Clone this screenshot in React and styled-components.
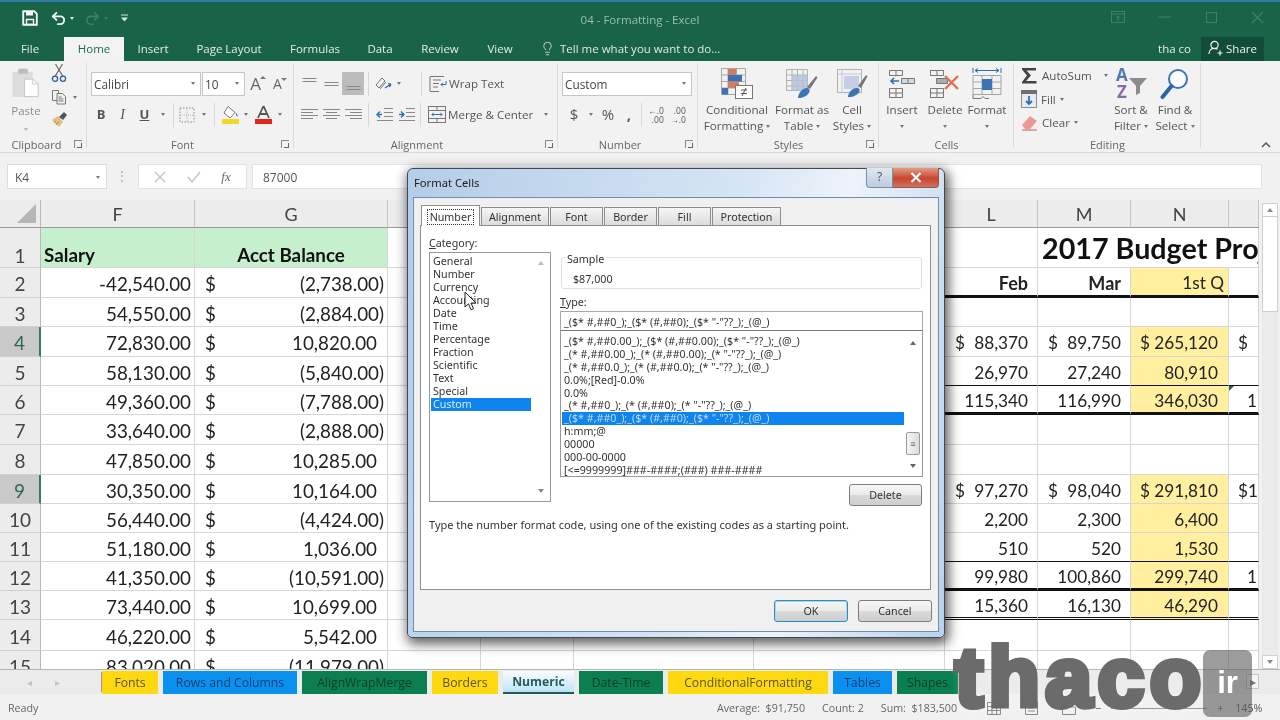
import React from "react";
import styled, { createGlobalStyle } from "styled-components";
import { Undo2, Redo2, Lightbulb } from "lucide-react";

const Global = createGlobalStyle`
  html, body { margin: 0; padding: 0; background: #f1f1f1; }
  * { box-sizing: border-box; }
`;
const UI = `"Open Sans", "Noto Sans", sans-serif`;
const CELL = `Lato, "Liberation Sans", sans-serif`;
const DLG = `"Noto Sans", "Open Sans", sans-serif`;

const Shell = styled.div`
  position: relative; width: 1280px; height: 720px; overflow: hidden; filter: blur(.35px);
  display: flex; flex-direction: column; font-family: ${UI}; color: #444; background: #f1f1f1;
`;
/* ---- title ---- */
const TitleBar = styled.header`
  height: 38px; flex: none; background: #196449; border-top: 2px solid #2e7aa0; padding-bottom: 4px;
  display: grid; grid-template-columns: 1fr auto 1fr; align-items: center;
`;
const Qat = styled.div`display: flex; align-items: center; padding-left: 21px; height: 100%;`;
const QatBtn = styled.span`
  display: inline-flex; align-items: center; justify-content: center;
  width: ${p => p.$w}px; margin-left: ${p => p.$ml || 0}px; color: ${p => p.$dim ? "#3f8068" : "#f2f6f4"};
`;
const QatCaret = styled.span`
  width: 0; height: 0; border: 2.5px solid transparent; border-top: 3px solid ${p => p.$dim ? "#3f8068" : "#dbe7e2"};
  margin: 3px 0 0 ${p => p.$ml || 3}px;
`;
const DocTitle = styled.div`font-size: 11.5px; color: #9ebdb0; margin-top: 2px;`;
const WinBtns = styled.div`display: flex; justify-content: flex-end; margin-right: -1px; height: 100%; align-items: center; margin-top: -2px;`;
const WinBtn = styled.span`width: 46.5px; display: flex; justify-content: center; color: #3f8068;`;

const TabsRow = styled.nav`
  height: 23px; flex: none; background: #196449; display: flex; align-items: stretch; padding-left: 12px;
  font-size: 11.5px; color: #e4ece8; & > * { padding-bottom: 2px; }
`;
const RibbonTab = styled.span`
  width: ${p => p.$w}px; margin-left: ${p => p.$ml || 0}px; display: flex; align-items: center; justify-content: center;
  ${p => p.$active ? "background:#f3f3f3;color:#1e6b4d;margin-top:-1px;" : ""}
`;
const TellMe = styled.span`display: flex; align-items: center; gap: 5px; margin-left: 14px; color: #dfe8e4;`;
const Spacer = styled.span`flex: 1;`;
const UserName = styled.span`display: flex; align-items: center; margin-right: 10px;`;
const ShareBtn = styled.span`
  width: 63px; margin-right: 16px; margin-top: -1px; background: #104c37; color: #f0f5f2;
  display: flex; align-items: center; justify-content: center; gap: 3px;
`;
/* ---- ribbon ---- */
const Ribbon = styled.section`
  height: 92px; flex: none; display: flex; background: #f2f2f3; border-bottom: 1px solid #d8d8d8; position: relative;
`;
const Group = styled.div`
  position: relative; width: ${p => p.$w}px; flex: none; display: flex; flex-direction: column;
  &::after { content: ""; position: absolute; right: 0; top: 2px; bottom: 4px; width: 1px; background: #dcdcdc; }
`;
const GroupBody = styled.div`flex: 1; display: flex; padding-left: ${p => p.$pl || 0}px; min-height: 0;`;
const GroupLabel = styled.div`height: 16px; flex: none; text-align: center; font-size: 11px; line-height: 17px; color: #666; padding-right: ${p => p.$pr || 0}px;`;
const Launcher = styled.span`
  position: absolute; right: 5px; bottom: 4px; width: 8px; height: 8px; border-left: 1px solid #888; border-top: 1px solid #888;
  &::after { content: ""; position: absolute; right: 0; bottom: 0; width: 4px; height: 4px; border-right: 1px solid #666; border-bottom: 1px solid #666; }
`;
const Collapse = styled.span`position: absolute; right: 9px; bottom: 4px; color: #555; display: flex;`;
const Caret = styled.span`
  display: inline-block; width: 0; height: 0; flex: none; vertical-align: middle;
  border-left: 2.5px solid transparent; border-right: 2.5px solid transparent; border-top: 3px solid #777;
  margin-left: ${p => p.$ml ?? 3}px;
`;
const PasteCol = styled.div`
  width: 36px; margin-left: 8px; padding-top: 6px; display: flex; flex-direction: column; align-items: center; color: #8d8d8d; font-size: 11.5px;
`;
const PasteLabel = styled.span`line-height: 15px; margin-top: 3px;`;
const PasteCaret = styled.span`margin-top: 3px; opacity: .5;`;
const ClipCol = styled.div`display: flex; flex-direction: column; padding-top: 1px; margin-left: 3px;`;
const ClipItem = styled.div`height: 22px; margin-bottom: ${p => p.$mb || 0}px; display: flex; align-items: center; width: 36px; padding-left: 4px;`;
const Stack = styled.div`display: flex; flex-direction: column; padding-top: 11px; gap: 8px;`;
const ToolRow = styled.div`display: flex; align-items: center; height: 23px;`;
const TextBox = styled.div`
  width: ${p => p.$w}px; height: 24px; background: #fff; border: 1px solid #c6c6c6; margin-right: ${p => p.$mr ?? 1}px;
  display: flex; align-items: center; justify-content: space-between; font-size: 11.8px; color: #444; padding: 0 5px 0 2px;
`;
const Tool = styled.span`
  width: ${p => p.$w || 22}px; height: 23px; flex: none; display: flex; align-items: center; justify-content: center;
  ${p => p.$on ? "background:#bcbcbc;" : ""}
`;
const Glyph = styled.span`
  font-family: ${p => p.$serif ? `"Liberation Serif", serif` : UI}; font-size: ${p => p.$s || 14}px; color: ${p => p.$c || "#555"};
  font-weight: ${p => p.$b ? 700 : 400}; font-style: ${p => p.$i ? "italic" : "normal"};
  text-decoration: ${p => p.$u ? "underline" : "none"}; line-height: 1;
`;
const DecGlyph = styled.span`display: inline-block; text-align: right; font-size: 8.5px; line-height: 9px; white-space: pre; color: #555;`;
const GrowA = styled.span`position: relative; font-size: ${p => p.$s}px; color: #666; line-height: 1; padding-right: 5px;
  &::after { content: ""; position: absolute; right: 0; top: 1px; border: 3px solid transparent; border-top: 0; border-bottom: 3px solid #777; ${p => p.$down ? "transform:rotate(180deg);" : ""} }
`;
const VSep = styled.span`width: 1px; height: 24px; background: #d8d8d8; flex: none; margin: 0 ${p => p.$mr ?? 3}px 0 ${p => p.$ml ?? 3}px;`;
const WideTool = styled.span`display: flex; align-items: center; gap: 2px; font-size: 11.6px; color: #555; width: ${p => p.$w}px; white-space: nowrap; flex: none;`;
const BigBtn = styled.div`
  width: ${p => p.$w}px; flex: none; display: flex; flex-direction: column; align-items: center; font-size: 11.6px; color: #555; line-height: 16px; text-align: center; white-space: nowrap;
`;
const BigIcon = styled.div`height: 41px; display: flex; align-items: center; justify-content: center; padding-top: 4px;`;
const EditCol = styled.div`width: 95px; padding-top: 3px; padding-left: 7px; display: flex; flex-direction: column;`;
const EditRow = styled.div`height: 23.5px; display: flex; align-items: center; gap: 4px; font-size: 11.6px; color: #555; white-space: nowrap;`;
/* ---- formula ---- */
const FormulaBar = styled.div`height: 47px; flex: none; display: flex; padding: 11px 18px 0 7px; background: #f1f1f1;`;
const NameBox = styled.div`
  width: 100px; height: 25px; background: #fff; border: 1px solid #dcdcdc; padding: 1px 6px 0 7px; font-size: 12px; color: #555;
  display: flex; align-items: center; justify-content: space-between;
`;
const Dots = styled.span`width: 31px; text-align: center; color: #aaa; font-size: 12px; line-height: 24px; letter-spacing: 1px;`;
const FxBox = styled.div`
  width: 109px; height: 25px; background: #fff; border: 1px solid #e2e2e2; display: flex; align-items: center; justify-content: space-around; padding: 0 5px; color: #c0c0c0;
`;
const FormulaInput = styled.div`
  flex: 1; margin-left: 5px; height: 25px; background: #fff; border: 1px solid #e2e2e2; padding: 1px 0 0 10px; font-size: 12px; color: #555; display: flex; align-items: center;
`;
/* ---- sheet ---- */
const SheetArea = styled.div`flex: none; height: 469px; display: flex; background: #f1f1f1;`;
const SheetGrid = styled.div`
  width: 1259px; flex: none; height: 469px; overflow: hidden; display: grid; background: #fff;
  grid-template-columns: 41px 154px 193px 93px 93px 180px 191px 93px 93px 98px 30px;
  grid-template-rows: 28px 40px 30px 29px 30px 29px 29px 30px 30px 29px 29px 29px 29px 29px 31px 30px;
  font-family: ${CELL}; color: #222;
`;
const CornerCell = styled.div`
  background: #ececec; border-right: 1px solid #b9b9b9; border-bottom: 1px solid #9a9a9a; position: relative;
  &::after { content: ""; position: absolute; right: 4px; bottom: 4px; border-style: solid; border-width: 0 0 19px 19px; border-color: transparent transparent #b6b6b6 transparent; }
`;
const ColHead = styled.div`
  background: #ececec; border-right: 1px solid #c4c4c4; border-bottom: 1px solid #9a9a9a; font-size: 18px; color: #444;
  display: flex; align-items: center; justify-content: center;
`;
const RowHead = styled.div`
  background: ${p => p.$sel ? "#c9c9c9" : "#ececec"}; color: ${p => p.$sel ? "#2c6a52" : "#444"};
  border-right: ${p => p.$sel ? "2px solid #3a7a5f" : "1px solid #b9b9b9"}; border-bottom: 1px solid #d0d0d0; font-size: 19px;
  display: flex; align-items: ${p => p.$end ? "flex-end" : "center"}; justify-content: center; padding-top: ${p => p.$end ? 0 : 2}px;
`;
const lineOf = v => v === "thick" ? "3px solid #111" : v === "thin" ? "1px solid #111" : v === "double" ? "3px double #111" : "1px solid #d6d6d6";
const Cell = styled.div`
  position: relative; min-width: 0; white-space: nowrap; overflow: hidden;
  grid-column: ${p => p.$span ? `span ${p.$span}` : "auto"};
  background: ${p => p.$fill || "#fff"}; border-right: 1px solid #d6d6d6; border-bottom: ${p => lineOf(p.$line)};
  display: flex; align-items: center; justify-content: flex-end;
  padding: ${p => p.$pad || "2px 4px 0"};
  font-size: ${p => p.$s || 18.8}px; font-weight: ${p => p.$b ? 700 : 400}; color: #222;
`;
const AccCell = styled(Cell)`justify-content: space-between; padding: ${p => p.$pad || "2px 3px 0 10px"};`;
const TitleCell = styled(Cell)`justify-content: flex-start; padding: 0 0 0 4px; font-size: 28.7px; font-weight: 700; color: #111; overflow: hidden;`;
const HeadCell = styled(Cell)`justify-content: ${p => p.$center ? "center" : "flex-start"}; align-items: flex-end; padding: 0 3px 1px; background: #c6efce; font-weight: 700; font-size: 18.8px; color: #111;`;
const Amount = styled.span`padding-right: ${p => p.$pos ? 7 : 0}px;`;
const CornerTick = styled.span`position: absolute; left: 0; top: 0; border-style: solid; border-width: 5px 5px 0 0; border-color: #1f6b44 transparent transparent transparent;`;
const VScroll = styled.aside`
  width: 21px; flex: none; display: flex; flex-direction: column; padding: 3px 2px 0 3px; background: #f1f1f1;
`;
const ScrollArrow = styled.span`height: 14px; background: #fff; border: 1px solid #cfcfcf; flex: none; display: flex; align-items: center; justify-content: center;`;
const ScrollThumb = styled.span`height: 95px; background: #fff; border: 1px solid #cfcfcf; border-top: 0; flex: none;`;
const ScrollTrack = styled.span`flex: 1; background: #ebebeb;`;
const Tri = styled.span`width: 0; height: 0; border-left: 3.5px solid transparent; border-right: 3.5px solid transparent;
  ${p => p.$down ? `border-top: 4px solid ${p.$c || "#8a8a8a"};` : `border-bottom: 4px solid ${p.$c || "#8a8a8a"};`}
`;
/* ---- sheet tabs ---- */
const TabBar = styled.div`height: 25px; flex: none; display: flex; background: #ebebeb; border-top: 1px solid #b5b5b5; position: relative;`;
const TabNav = styled.div`width: 102px; flex: none; display: flex; align-items: center; color: #c4c4c4; font-size: 10px; padding-left: 27px; gap: 23px; border-right: 1px solid #999; margin: 2px 0 2px;`;
const SheetTabs = styled.div`display: flex; gap: 5px; padding-top: 1px;`;
const SheetTab = styled.div`
  width: ${p => p.$w}px; height: 23px; background: ${p => p.$bg}; color: ${p => p.$fg}; font-size: 12.2px;
  display: flex; align-items: center; justify-content: center; white-space: nowrap;
  ${p => p.$active ? "background:linear-gradient(#fafdff,#bfe3f7);font-weight:700;color:#245f5c;border-bottom:2px solid #1f5d58;" : ""}
`;
const TabScrollRight = styled.span`position: absolute; right: 21px; top: 4px; width: 13px; height: 15px; border: 1px solid #c4c4c4; background: #f4f4f4; display: flex; align-items: center; justify-content: center; color: #777; font-size: 8px;`;
const StatusBar = styled.footer`
  flex: 1; display: grid; grid-template-columns: 709px 1fr; align-items: center; background: #f1f1f1; font-size: 10.7px; color: #666; padding: 2px 0 0 8px;
`;
const StatusRight = styled.div`display: flex; align-items: center; gap: 17px; white-space: nowrap;`;
const ViewIcons = styled.div`display: flex; align-items: center; gap: 24px; margin-left: 13px; color: #777;`;
const Zoomer = styled.div`display: flex; align-items: center; margin-left: -5px; gap: 6px; color: #555;`;
const ZoomLine = styled.span`width: 96px; height: 1px; background: #999; margin: 0 4px;`;
const ZoomValue = styled.span`margin-left: 6px;`;
/* ---- dialog ---- */
const Dialog = styled.div`
  position: absolute; left: 407px; top: 168px; width: 538px; height: 470px; border: 1px solid #3e4a55; border-radius: 6px 6px 5px 5px;
  background: linear-gradient(100deg, #b4cde8 0%, #d6e5f4 55%, #eef3f9 72%, #b9d1ea 100%); box-shadow: 2px 4px 12px 2px rgba(0,0,0,.62);
  display: flex; flex-direction: column; font-family: ${DLG}; color: #333; font-size: 10.7px;
`;
const DlgTitle = styled.div`height: 28px; flex: none; display: flex; align-items: center; padding: 0 0 2px 6px; font-size: 11.2px; color: #222; position: relative;`;
const DlgBtns = styled.div`position: absolute; top: -1px; right: 5px; display: flex; height: 20px;`;
const HelpBtn = styled.span`width: 27px; border: 1px solid #7d8fa3; border-top: 0; border-radius: 0 0 0 4px; background: linear-gradient(#dde7f1,#bccddd); text-align: center; color: #556; font-size: 12px; line-height: 18px;`;
const CloseBtn = styled.span`width: 46px; border: 1px solid #8a5a50; border-top: 0; border-left: 0; border-radius: 0 0 4px 0; background: linear-gradient(#e49a82,#c8452f 55%,#d27460); color: #fff; display: flex; align-items: center; justify-content: center;`;
const DlgPanel = styled.div`
  flex: 1; margin: 0 5px 5px 5px; background: #f0f0f0; border: 1px solid #6f8daf; padding: 8px 7px 0 6px; display: flex; flex-direction: column; position: relative;
`;
const DlgTabs = styled.div`display: flex; align-items: flex-end; gap: 1px; height: 20px; padding-left: 1px; margin-bottom: -1px; position: relative; z-index: 1;`;
const DlgTab = styled.div`
  width: ${p => p.$w}px; height: ${p => p.$active ? 21 : 19}px; border: 1px solid #8e8e8e; border-bottom: ${p => p.$active ? 0 : "1px solid #8e8e8e"}; padding-top: 1px;
  background: ${p => p.$active ? "#fff" : "linear-gradient(#f6f6f6,#dcdcdc)"}; display: flex; align-items: center; justify-content: center;
`;
const FocusText = styled.span`outline: 1px dotted #333; padding: 0 2px;`;
const Page = styled.div`
  height: 365px; flex: none; background: #fff; border: 1px solid #8e8e8e; padding: 9px 7px 0 8px; display: flex; flex-direction: column;
`;
const PageGrid = styled.div`display: grid; grid-template-columns: 122px 363px; column-gap: 9px; height: 270px;`;
const ColumnL = styled.div`display: flex; flex-direction: column;`;
const ColumnR = styled.div`display: flex; flex-direction: column; padding-top: 22px;`;
const FieldLabel = styled.div`height: ${p => p.$h || 17}px; line-height: 16px; margin-top: ${p => p.$mt || 0}px;`;
const Uline = styled.span`text-decoration: underline;`;
const CatList = styled.div`
  height: 250px; border: 1px solid #8f9aa5; display: flex; background: #fff; padding: 2px 0 0 1px;
`;
const Items = styled.div`flex: 1; min-width: 0;`;
const CatItem = styled.div`
  height: 13px; line-height: 13px; padding-left: 2px; white-space: nowrap;
  ${p => p.$sel ? "background:#0f83ee;color:#d8ecff;" : ""}
`;
const ListScroll = styled.div`width: ${p => p.$w}px; flex: none; display: flex; flex-direction: column; align-items: center; justify-content: space-between; padding: 6px 0 8px; position: relative;`;
const SampleBox = styled.div`
  height: 32px; margin: 0 1px; border: 1px solid #dfdfdf; border-radius: 3px; position: relative; padding: 14px 0 0 11px; line-height: 14px;
`;
const Legend = styled.span`position: absolute; left: 3px; top: -6px; background: #fff; padding: 0 2px;`;
const TypeInput = styled.div`height: 20px; border: 1px solid #a9a9a9; border-bottom: 1px solid #777; padding-left: 3px; line-height: 20px; white-space: nowrap; font-size: 10.7px;`;
const TypeList = styled.div`height: 146px; border: 1px solid #8f9aa5; border-top: 0; display: flex; padding: 4px 0 0 1px; font-size: 10.7px;`;
const TypeItem = styled.div`
  height: 12.9px; line-height: 13px; padding-left: 2px; white-space: nowrap;
  ${p => p.$sel ? "background:#0f83ee;color:#bcdcfb;" : ""}
`;
const ScrollGrip = styled.span`
  position: absolute; left: 2px; top: 97px; width: 14px; height: 23px; border: 1px solid #9a9a9a; border-radius: 2px; background: linear-gradient(90deg,#f5f5f5,#dcdcdc);
  display: flex; align-items: center; justify-content: center; color: #666; font-size: 9px; line-height: 3px;
`;
const DlgButton = styled.div`
  width: ${p => p.$w || 74}px; height: 22px; border: 1px solid ${p => p.$def ? "#3e87b4" : "#7d7d7d"}; border-radius: 3px; ${p => p.$def ? "box-shadow: inset 0 0 0 1px #a8d6ef;" : ""}
  background: linear-gradient(#f6f6f6 0%,#ebebeb 48%,#d9d9d9 52%,#cfcfcf 100%); display: flex; align-items: center; justify-content: center; color: #333;
`;
const DeleteRow = styled.div`display: flex; justify-content: flex-end; margin: 7px 1px 0 0;`;
const Desc = styled.div`margin-top: 13px; line-height: 14px; white-space: nowrap; font-size: 11px;`;
const DlgFoot = styled.div`display: flex; justify-content: flex-end; gap: 10px; padding-top: 10px; margin-right: -1px;`;
const MouseCursor = styled.svg`position: absolute; left: 50px; top: 93px; z-index: 3;`;
/* ---- watermark ---- */
const Watermark = styled.div`
  position: absolute; left: 955px; top: 631px; z-index: 5; font-family: "Liberation Sans", sans-serif; font-weight: 700; font-size: 84px; line-height: 92px;
  letter-spacing: 5.5px; color: #666; -webkit-text-stroke: 6px #666; opacity: .96; text-shadow: 0 0 8px rgba(255,255,255,.55);
`;
const WatermarkBadge = styled.div`
  position: absolute; left: 1203px; top: 650px; width: 49px; height: 67px; z-index: 6; border-radius: 7px; background: rgba(95,95,95,.62);
  color: #fff; font-family: "Liberation Sans", sans-serif; font-weight: 700; font-size: 31px; text-align: center; line-height: 66px;
`;

/* ---- icons ---- */
const S = ({ w, h, vb, children }) => <svg width={w} height={h} viewBox={vb || `0 0 ${w} ${h}`} fill="none">{children}</svg>;
const SaveIcon = () => <S w={16} h={16}><path d="M1.2 1.2h11l2.6 2.6v11H1.2z" stroke="#f4f7f5" strokeWidth="1.9"/><path d="M4 1.5h7v4H4z" fill="#f4f7f5"/><path d="M4.5 9.5h7v5h-7z" stroke="#f4f7f5" strokeWidth="1.4"/></S>;
const RestoreIcon = () => <S w={14} h={12}><rect x=".5" y=".5" width="13" height="11" stroke="#3f8068"/><path d="M1 3h12M7 10V5M5 7l2-2 2 2" stroke="#3f8068"/></S>;
const ShareIcon = () => <S w={15} h={16}><circle cx="6.5" cy="5" r="3.6" stroke="#f0f5f2" strokeWidth="1.2"/><path d="M1 14c0-4 2.5-5.6 5.5-5.6 1.2 0 2.4.3 3.3 1M9.5 13h5M12 10.5v5" stroke="#f0f5f2" strokeWidth="1.2"/></S>;
const PasteIcon = () => <S w={30} h={34}><path d="M1 5h8V1h6v4h7v26H1z" fill="#dcdcdc"/><rect x="7" y="2" width="10" height="5" fill="#bdbdbd"/><path d="M13.5 12.5h9l5 5v13h-14z" fill="#fff" stroke="#c4c4c4"/><path d="M22 12.5v5h5" stroke="#c4c4c4"/></S>;
const CutIcon = () => <S w={16} h={20}><path d="M4.5 1l7.5 12.5M11.5 1L4 13.5" stroke="#666" strokeWidth="1.2"/><circle cx="4" cy="15.8" r="2.6" stroke="#2f5f97" strokeWidth="1.3"/><circle cx="12" cy="15.8" r="2.6" stroke="#2f5f97" strokeWidth="1.3"/></S>;
const CopyIcon = () => <S w={16} h={16}><path d="M1.5 1.5h6v10h-6z" stroke="#777"/><path d="M6 4.5h5.5l3 3v7.5H6z" fill="#f2f2f3" stroke="#777"/><path d="M7.5 8h3M7.5 10h5M7.5 12h5" stroke="#777"/></S>;
const PainterIcon = () => <S w={18} h={18}><path d="M1 10l6-4 5 6-4 5z" fill="#e0c07f"/><path d="M3 13l2-2M5 15l2-3" stroke="#a88a4f"/><path d="M8 7l5-5 3 3-4 5z" fill="#555"/></S>;
const BordersIcon = () => <S w={16} h={16}><path d="M1 1h14v14H1z" stroke="#8a8a8a" strokeDasharray="1.5 1.5"/><path d="M8 1v14M1 8h14" stroke="#b5b5b5" strokeDasharray="1 1"/></S>;
const FillIcon = () => <S w={19} h={19}><path d="M7 1.5l7 6-5 5.5-6-5z" stroke="#777" fill="#fff"/><path d="M14.5 7.5c1.5 1.5 2.5 3 2 4-.7 0-1.5-1.5-2-4z" fill="#2f5f97"/><rect x="1" y="14" width="17" height="5" fill="#f3d727"/></S>;
const FontColorIcon = () => <S w={17} h={19}><path d="M8.5 1L3 13M8.5 1l5.5 12M5 9h7" stroke="#555" strokeWidth="1.8"/><rect y="14" width="17" height="5" fill="#e0261a"/></S>;
const Lines = ({ y, align }) => <S w={17} h={16}>{y.map((v, i) => { const wid = align === "r" ? (i % 2 ? 12 : 17) : align === "c" ? (i % 2 ? 11 : 17) : align === "l" ? (i % 2 ? 12 : 17) : 14; const x = align === "r" ? 17 - wid : align === "c" ? (17 - wid) / 2 : align === "l" ? 0 : 1.5; return <path key={i} d={`M${x} ${v}.5h${wid}`} stroke="#888"/>; })}</S>;
const Orient = () => <S w={18} h={16}><path d="M1 9l6-7 3 3-6 7zM5 13l6-7" stroke="#777"/><path d="M10 12l6-4M16 8l-3-.5M16 8l-1.5 3" stroke="#2f5f97" strokeWidth="1.2"/></S>;
const IndentIcon = ({ flip }) => <S w={17} h={15}><path d="M8 1.5h9M8 5.5h9M8 9.5h9M1 13.5h16" stroke="#888"/><path d={flip ? "M1 7.5h5M3 4.5L6 7.5 3 10.5" : "M6 7.5H1M4 4.5L1 7.5l3 3"} stroke="#2f6fb0" strokeWidth="1.4"/></S>;
const WrapIcon = () => <S w={18} h={18}><path d="M1 1.5h14M1 1.5v15h9M4 5h8M4 8.5h6M4 12h5" stroke="#777"/><path d="M17 6v3.5h-5M14 7.5l-2 2 2 2" stroke="#2f6fb0"/></S>;
const MergeIcon = () => <S w={18} h={17}><rect x=".5" y=".5" width="17" height="16" stroke="#777"/><path d="M1 4.5h16M1 12.5h16M9 1v3M9 13v3" stroke="#777"/><path d="M4 8.5h10M5.5 6.8L4 8.5l1.5 1.7M12.5 6.8L14 8.5l-1.5 1.7" stroke="#2f6fb0"/></S>;
const CondIcon = () => <S w={32} h={31}><g stroke="#a8a8a8"><path d="M.5.5h24v26H.5zM.5 7h24M.5 13.5h24M.5 20h24M7 .5v26M15.5.5v26"/></g><rect x="7" y="1" width="8" height="6" fill="#d47c5c"/><rect x="7" y="7" width="14" height="6.5" fill="#3b72b5"/><rect x="7" y="13.5" width="11" height="6.5" fill="#d47c5c"/><rect x="1" y="20" width="6" height="6.5" fill="#3b72b5"/><rect x="14.5" y="17.5" width="17" height="13" fill="#fff" stroke="#777"/><path d="M20 22h6M20 25.5h6M25 20l-4 8" stroke="#555"/></S>;
const TableIcon = () => <S w={32} h={30}><g stroke="#b0b0b0"><path d="M.5.5h21v21H.5zM.5 6h21M.5 11.5h21M.5 17h21M6 .5v21M11.5.5v21M17 .5v21"/></g><rect x="6" y="6" width="15.5" height="15.5" fill="#b8c2dd" opacity=".85"/><path d="M21 18L30 7l1.5 1.5L24 20z" fill="#777"/><path d="M12 29c0-4 4-10 9-10 2 0 3 1.5 2.5 3.5C22 27 16 29.5 12 29z" fill="#3b74b5"/></S>;
const CellStyleIcon = () => <S w={31} h={29}><path d="M.5.5h24v23H.5z" stroke="#b0b0b0"/><path d="M.5 5h24M5 .5v23" stroke="#c8c8c8"/><rect x="7" y="7" width="15" height="13" fill="#c4cee7"/><path d="M21 17L29 6l1.5 1.5L24 19z" fill="#777"/><path d="M11 28c0-4 4-9 9-9 2 0 3 1.5 2.5 3.5C21 26 15 28.5 11 28z" fill="#3b74b5"/></S>;
const InsertIcon = () => <S w={27} h={28}><g stroke="#777"><path d="M.5.5h13v5H.5zM7 .5v5"/><path d="M.5 18.5h13v9H.5zM7 18.5v9M.5 23h13"/><path d="M12.5 8.5h13v5h-13zM19 8.5v5" fill="#d4d8df"/></g><path d="M10 11H2M5 8l-3 3 3 3" stroke="#2f6fb0" strokeWidth="1.5"/></S>;
const DeleteIcon = () => <S w={31} h={28}><g stroke="#777"><path d="M.5.5h13v5H.5zM7 .5v5"/><path d="M.5 18.5h13v9H.5zM7 18.5v9M.5 23h13"/><path d="M6.5 8.5h11v5h-11z" fill="#a9afb9"/></g><path d="M15 6l13 13M28 6L15 19" stroke="#e2704d" strokeWidth="2.4"/></S>;
const FormatIcon = () => <S w={30} h={33}><path d="M1 1v5M29 1v5M3 3.5h24M3 3.5l3-2M3 3.5l3 2M27 3.5l-3-2M27 3.5l-3 2" stroke="#2f6fb0"/><g stroke="#a5a5a5"><path d="M1 8.5h28v19H1zM10 8.5v19M20 8.5v19M1 15h28M1 21.5h28"/></g><rect x="10" y="12" width="10" height="11" fill="#3b74b5"/><path d="M1 27.5v4h8l2-2 2 2h4" stroke="#777"/></S>;
const SigmaIcon = () => <S w={17} h={17}><path d="M1 1h14v2.5H5.5L10 8.5 5 14h10.5v2.5H1V15l5-6.5-5-6z" fill="#444"/></S>;
const FillDownIcon = () => <S w={16} h={18}><rect x=".5" y=".5" width="15" height="17" fill="#e3ebf5" stroke="#8d8d8d"/><rect width="16" height="4" fill="#6f6f6f"/><path d="M8 6v8M5 11l3 3 3-3" stroke="#2f6fb0" strokeWidth="1.8"/></S>;
const EraserIcon = () => <S w={17} h={17}><path d="M1 11l8-9 7 5-7 8H4z" fill="#e89a97"/><path d="M1 16h15" stroke="#d98a7f" strokeWidth="1.5"/></S>;
const SortIcon = () => <svg width="33" height="42" viewBox="0 -4 33 42"><text x="1" y="14" fontFamily="Open Sans, sans-serif" fontSize="17" fontWeight="700" fill="#5677b3">A</text><text x="2" y="31" fontFamily="Open Sans, sans-serif" fontSize="17" fontWeight="700" fill="#8a6aa8">Z</text><path d="M14 11h18l-7 8v7l-4 2v-9z" fill="#8c8c8c"/></svg>;
const FindIcon = () => <S w={30} h={32}><circle cx="18" cy="11" r="9" stroke="#3b74b5" strokeWidth="2" fill="#fdfdfd"/><path d="M11.5 18L2.5 29" stroke="#2b64a8" strokeWidth="4" strokeLinecap="round"/></S>;
const GridViewIcon = () => <S w={14} h={13}><path d="M.5.5h13v12H.5zM.5 4.5h13M.5 8.5h13M5 .5v12M9.5.5v12" stroke="#888"/></S>;
const PageIcon = () => <S w={13} h={14}><path d="M.5.5h12v13H.5zM3 4h7M3 7h7M3 10h7" stroke="#888"/></S>;
const BreakIcon = () => <S w={14} h={13}><path d="M.5 5h13v7.5H.5zM3.5 5V1h7v4" stroke="#888"/></S>;

/* ---- data ---- */
const rowHeads = Array.from({ length: 14 }, (_, i) => i + 2);
const leftData = {
  2: ["-42,540.00", "(2,738.00)"], 3: ["54,550.00", "(2,884.00)"], 4: ["72,830.00", "10,820.00"], 5: ["58,130.00", "(5,840.00)"],
  6: ["49,360.00", "(7,788.00)"], 7: ["33,640.00", "(2,888.00)"], 8: ["47,850.00", "10,285.00"], 9: ["30,350.00", "10,164.00"],
  10: ["56,440.00", "(4,424.00)"], 11: ["51,180.00", "1,036.00"], 12: ["41,350.00", "(10,591.00)"], 13: ["73,440.00", "10,699.00"],
  14: ["46,220.00", "5,542.00"], 15: ["83,020.00", "(11,979.00)"],
};
const rightData = {
  2: ["Feb", "Mar", "1st Q", ""], 4: ["$88,370", "$89,750", "$265,120", "$"], 5: ["26,970", "27,240", "80,910", ""],
  6: ["115,340", "116,990", "346,030", "1"], 9: ["$97,270", "$98,040", "$291,810", "$1"], 10: ["2,200", "2,300", "6,400", ""],
  11: ["510", "520", "1,530", ""], 12: ["99,980", "100,860", "299,740", "1"], 13: ["15,360", "16,130", "46,290", ""],
};
const lines = { 2: "thick", 5: "thin", 6: "thick", 11: "thin", 12: "thick", 13: "double" };
const yellowRows = [2, 4, 5, 6, 9, 10, 11, 12, 13];
const categories = ["General", "Number", "Currency", "Accounting", "Date", "Time", "Percentage", "Fraction", "Scientific", "Text", "Special", "Custom"];
const formats = [
  '_($* #,##0.00_);_($* (#,##0.00);_($* "-"??_);_(@_)',
  '_(* #,##0.00_);_(* (#,##0.00);_(* "-"??_);_(@_)',
  '_(* #,##0.0_);_(* (#,##0.0);_(* "-"??_);_(@_)',
  "0.0%;[Red]-0.0%", "0.0%",
  '_(* #,##0_);_(* (#,##0);_(* "-"??_);_(@_)',
  '_($* #,##0_);_($* (#,##0);_($* "-"??_);_(@_)',
  "h:mm;@", "00000", "000-00-0000", "[<=9999999]###-####;(###) ###-####",
];
const sheetTabs = [
  ["Fonts", 56, "#ffd90f", "#5a5320"], ["Rows and Columns", 134, "#0a90ee", "#163f73"], ["AlignWrapMerge", 125, "#0b7f50", "#0d3d28"],
  ["Borders", 66, "#ffd90f", "#5a5320"], ["Numeric", 71, "", "", true], ["Date-Time", 84, "#0b7f50", "#0d3d28"],
  ["ConditionalFormatting", 160, "#ffd90f", "#5a5320"], ["Tables", 59, "#0a90ee", "#163f73"], ["Shapes", 61, "#0b7f50", "#0d3d28"],
];
const ribbonTabs = [["Home", 60, 16, true], ["Insert", 58], ["Page Layout", 94], ["Formulas", 78], ["Data", 52], ["Review", 68], ["View", 52]];

const textPad = ["2px 9px 0 4px", "2px 9px 0 4px", "2px 10px 0 4px", "2px 1px 0 0"];
const accPad = ["2px 9px 0 10px", "2px 9px 0 10px", "2px 10px 0 9px", "2px 1px 0 9px"];

function RightCell({ value, col, row, fill }) {
  const line = lines[row];
  if (!value) return <Cell $fill={fill} $line={line} />;
  if (value.startsWith("$")) {
    return <AccCell $fill={fill} $line={line} $pad={accPad[col]} $s={17.2}>
      <span>$</span><span>{value.slice(1)}</span>
    </AccCell>;
  }
  const bold = row === 2 && col < 2;
  const pad = row === 2 && col === 2 ? "2px 4px 0" : textPad[col];
  return <Cell $fill={fill} $line={line} $b={bold} $pad={pad} $s={bold ? 18 : 17.2}>{value}</Cell>;
}

export default function App() {
  return (
    <Shell>
      <Global />
      <TitleBar>
        <Qat>
          <QatBtn $w={18}><SaveIcon /></QatBtn>
          <QatBtn $w={18} $ml={10}><Undo2 size={17} strokeWidth={2.6} /></QatBtn>
          <QatCaret />
          <QatBtn $w={18} $ml={9} $dim><Redo2 size={17} strokeWidth={2.2} /></QatBtn>
          <QatCaret $dim />
          <QatBtn $w={8} $ml={12}><S w={7} h={8}><path d="M0 1h7" stroke="#dbe7e2"/><path d="M0 3.5h7L3.5 7.5z" fill="#dbe7e2"/></S></QatBtn>
        </Qat>
        <DocTitle>04 - Formatting - Excel</DocTitle>
        <WinBtns>
          <WinBtn><RestoreIcon /></WinBtn>
          <WinBtn><S w={13} h={2}><path d="M0 1h13" stroke="#3f8068"/></S></WinBtn>
          <WinBtn><S w={11} h={11}><rect x=".5" y=".5" width="10" height="10" stroke="#3f8068"/></S></WinBtn>
          <WinBtn><S w={13} h={13}><path d="M1 1l11 11M12 1L1 12" stroke="#3f8068" strokeWidth="1.2"/></S></WinBtn>
        </WinBtns>
      </TitleBar>
      <TabsRow>
        <RibbonTab $w={36}>File</RibbonTab>
        {ribbonTabs.map(([t, w, ml, a]) => <RibbonTab key={t} $w={w} $ml={ml} $active={a}>{t}</RibbonTab>)}
        <TellMe><Lightbulb size={15} strokeWidth={1.3} />Tell me what you want to do...</TellMe>
        <Spacer />
        <UserName>tha co</UserName>
        <ShareBtn><ShareIcon />Share</ShareBtn>
      </TabsRow>
      <Ribbon>
        <Group $w={87}>
          <GroupBody>
            <PasteCol>
              <PasteIcon />
              <PasteLabel>Paste</PasteLabel>
              <PasteCaret><Caret $ml={0} /></PasteCaret>
            </PasteCol>
            <ClipCol>
              <ClipItem $mb={2}><CutIcon /></ClipItem>
              <ClipItem><CopyIcon /><Caret $ml={6} /></ClipItem>
              <ClipItem><PainterIcon /></ClipItem>
            </ClipCol>
          </GroupBody>
          <GroupLabel $pr={14}>Clipboard</GroupLabel>
          <Launcher />
        </Group>
        <Group $w={207}>
          <GroupBody $pl={4}>
            <Stack>
              <ToolRow>
                <TextBox $w={110}>Calibri<Caret /></TextBox>
                <TextBox $w={43} $mr={2}>10<Caret /></TextBox>
                <Tool $w={22}><GrowA $s={17}>A</GrowA></Tool>
                <Tool $w={22}><GrowA $s={14} $down>A</GrowA></Tool>
              </ToolRow>
              <ToolRow>
                <Tool $w={20}><Glyph $b $s={13}>B</Glyph></Tool>
                <Tool $w={23}><Glyph $i $s={14} $serif>I</Glyph></Tool>
                <Tool $w={21}><Glyph $b $u $s={13}>U</Glyph></Tool>
                <Tool $w={15}><Caret $ml={0} /></Tool>
                <VSep />
                <Tool $w={20}><BordersIcon /></Tool>
                <Tool $w={13}><Caret $ml={0} /></Tool>
                <VSep $ml={4} $mr={4} />
                <Tool $w={22}><FillIcon /></Tool>
                <Tool $w={10}><Caret $ml={0} /></Tool>
                <Tool $w={24}><FontColorIcon /></Tool>
                <Tool $w={9}><Caret $ml={0} /></Tool>
              </ToolRow>
            </Stack>
          </GroupBody>
          <GroupLabel $pr={16}>Font</GroupLabel>
          <Launcher />
        </Group>
        <Group $w={264}>
          <GroupBody $pl={4}>
            <Stack>
              <ToolRow>
                <Tool $w={22}><Lines y={[2, 5]} /></Tool>
                <Tool $w={22}><Lines y={[6, 9]} /></Tool>
                <Tool $w={22} $on><Lines y={[10, 13]} /></Tool>
                <VSep $ml={4} $mr={4} />
                <Tool $w={22}><Orient /></Tool>
                <Tool $w={8}><Caret $ml={0} /></Tool>
                <VSep $ml={18} $mr={7} />
                <WideTool $w={110}><WrapIcon />Wrap Text</WideTool>
              </ToolRow>
              <ToolRow>
                <Tool $w={22}><Lines y={[2, 5, 8, 11]} align="l" /></Tool>
                <Tool $w={22}><Lines y={[2, 5, 8, 11]} align="c" /></Tool>
                <Tool $w={22}><Lines y={[2, 5, 8, 11]} align="r" /></Tool>
                <VSep $ml={4} $mr={4} />
                <Tool $w={22}><IndentIcon /></Tool>
                <Tool $w={22}><IndentIcon flip /></Tool>
                <VSep $ml={3} $mr={7} />
                <WideTool $w={125}><MergeIcon />Merge &amp; Center<Caret $ml={9} /></WideTool>
              </ToolRow>
            </Stack>
          </GroupBody>
          <GroupLabel $pr={18}>Alignment</GroupLabel>
          <Launcher />
        </Group>
        <Group $w={140}>
          <GroupBody $pl={4}>
            <Stack>
              <ToolRow><TextBox $w={130}>Custom<Caret /></TextBox></ToolRow>
              <ToolRow>
                <Tool $w={24}><Glyph $s={15}>$</Glyph></Tool>
                <Tool $w={10}><Caret $ml={0} /></Tool>
                <Tool $w={24}><Glyph $s={15}>%</Glyph></Tool>
                <Tool $w={18}><Glyph $s={15} $b>,</Glyph></Tool>
                <VSep />
                <Tool $w={22}><DecGlyph>←.0<br/>.00</DecGlyph></Tool>
                <Tool $w={22}><DecGlyph>.00<br/>→.0</DecGlyph></Tool>
              </ToolRow>
            </Stack>
          </GroupBody>
          <GroupLabel $pr={16}>Number</GroupLabel>
          <Launcher />
        </Group>
        <Group $w={181}>
          <GroupBody $pl={1}>
            <BigBtn $w={76}><BigIcon><CondIcon /></BigIcon>Conditional<span>Formatting<Caret /></span></BigBtn>
            <BigBtn $w={54}><BigIcon><TableIcon /></BigIcon>Format as<span>Table<Caret /></span></BigBtn>
            <BigBtn $w={46}><BigIcon><CellStyleIcon /></BigIcon>Cell<span>Styles<Caret /></span></BigBtn>
          </GroupBody>
          <GroupLabel>Styles</GroupLabel>
          <Launcher />
        </Group>
        <Group $w={135}>
          <GroupBody $pl={1}>
            <BigBtn $w={44}><BigIcon><InsertIcon /></BigIcon>Insert<span><Caret $ml={0} /></span></BigBtn>
            <BigBtn $w={42}><BigIcon><DeleteIcon /></BigIcon>Delete<span><Caret $ml={0} /></span></BigBtn>
            <BigBtn $w={42}><BigIcon><FormatIcon /></BigIcon>Format<span><Caret $ml={0} /></span></BigBtn>
          </GroupBody>
          <GroupLabel>Cells</GroupLabel>
        </Group>
        <Group $w={187}>
          <GroupBody>
            <EditCol>
              <EditRow><SigmaIcon />AutoSum<Caret $ml={8} /></EditRow>
              <EditRow><FillDownIcon />Fill<Caret $ml={0} /></EditRow>
              <EditRow><EraserIcon />Clear<Caret $ml={0} /></EditRow>
            </EditCol>
            <BigBtn $w={44}><BigIcon><SortIcon /></BigIcon>Sort &amp;<span>Filter<Caret /></span></BigBtn>
            <BigBtn $w={44}><BigIcon><FindIcon /></BigIcon>Find &amp;<span>Select<Caret /></span></BigBtn>
          </GroupBody>
          <GroupLabel>Editing</GroupLabel>
        </Group>
        <Collapse><S w={10} h={7}><path d="M1 6l4-4 4 4" stroke="#555" strokeWidth="1.5"/></S></Collapse>
      </Ribbon>
      <FormulaBar>
        <NameBox>K4<Caret /></NameBox>
        <Dots>⋮</Dots>
        <FxBox>
          <S w={12} h={12}><path d="M1 1l10 10M11 1L1 11" stroke="#c4c4c4" strokeWidth="1.4"/></S>
          <S w={14} h={12}><path d="M1 6l4 5 8-10" stroke="#c4c4c4" strokeWidth="1.4"/></S>
          <Glyph $i $s={13} $c="#666" $serif>fx</Glyph>
        </FxBox>
        <FormulaInput>87000</FormulaInput>
      </FormulaBar>
      <SheetArea>
        <SheetGrid>
          <CornerCell />
          {["F", "G", "", "", "", "", "L", "M", "N", ""].map((c, i) => <ColHead key={i}>{c}</ColHead>)}

          <RowHead $end>1</RowHead>
          <HeadCell>Salary</HeadCell>
          <HeadCell $center>Acct Balance</HeadCell>
          <Cell /><Cell /><Cell /><Cell /><Cell />
          <TitleCell $span={3}>2017 Budget Projections</TitleCell>

          {rowHeads.map(r => (
            <React.Fragment key={r}>
              <RowHead $sel={r === 4 || r === 9}>{r}</RowHead>
              <Cell $pad="2px 3px 0 4px">{leftData[r][0]}</Cell>
              <AccCell>
                <span>$</span>
                <Amount $pos={!leftData[r][1].startsWith("(")}>{leftData[r][1]}</Amount>
              </AccCell>
              <Cell /><Cell /><Cell />
              <Cell $line={lines[r]} />
              {[0, 1, 2, 3].map(c => {
                const v = rightData[r] ? rightData[r][c] : "";
                const fill = c === 2 && yellowRows.includes(r) ? "#ffef9f" : undefined;
                if (c === 3 && r === 6) {
                  return <Cell key={c} $line={lines[r]} $pad="2px 1px 0 0" $s={17.2}><CornerTick />1</Cell>;
                }
                return <RightCell key={c} value={v} col={c} row={r} fill={fill} />;
              })}
            </React.Fragment>
          ))}
        </SheetGrid>
        <VScroll>
          <ScrollArrow><Tri /></ScrollArrow>
          <ScrollThumb />
          <ScrollTrack />
          <ScrollArrow><Tri $down /></ScrollArrow>
        </VScroll>
      </SheetArea>
      <TabBar>
        <TabNav><span>◂</span><span>▸</span></TabNav>
        <SheetTabs>
          {sheetTabs.map(([t, w, bg, fg, a]) => <SheetTab key={t} $w={w} $bg={bg} $fg={fg} $active={a}>{t}</SheetTab>)}
        </SheetTabs>
        <TabScrollRight>▶</TabScrollRight>
      </TabBar>
      <StatusBar>
        <span>Ready</span>
        <StatusRight>
          <span>Average:&nbsp; $91,750</span>
          <span>Count: 2</span>
          <span>Sum:&nbsp; $183,500</span>
          <ViewIcons>
            <GridViewIcon /><PageIcon /><BreakIcon />
            <Zoomer>−<ZoomLine />+<ZoomValue>145%</ZoomValue></Zoomer>
          </ViewIcons>
        </StatusRight>
      </StatusBar>

      <Dialog>
        <DlgTitle>
          Format Cells
          <DlgBtns>
            <HelpBtn>?</HelpBtn>
            <CloseBtn><S w={12} h={11}><path d="M1.5 1l9 9M10.5 1l-9 9" stroke="#fff" strokeWidth="2.2"/></S></CloseBtn>
          </DlgBtns>
        </DlgTitle>
        <DlgPanel>
          <MouseCursor width="14" height="20" viewBox="0 0 14 20"><path d="M1 1v15l3.5-3.2 2.5 6 2.5-1-2.5-5.8h5z" fill="#fff" stroke="#222"/></MouseCursor>
          <DlgTabs>
            <DlgTab $w={59} $active><FocusText>Number</FocusText></DlgTab>
            <DlgTab $w={68}>Alignment</DlgTab>
            <DlgTab $w={53}>Font</DlgTab>
            <DlgTab $w={53}>Border</DlgTab>
            <DlgTab $w={53}>Fill</DlgTab>
            <DlgTab $w={69}>Protection</DlgTab>
          </DlgTabs>
          <Page>
            <PageGrid>
              <ColumnL>
                <FieldLabel><Uline>C</Uline>ategory:</FieldLabel>
                <CatList>
                  <Items>
                    {categories.map(c => <CatItem key={c} $sel={c === "Custom"}>{c}</CatItem>)}
                  </Items>
                  <ListScroll $w={19}><Tri $c="#bbb" /><Tri $down $c="#888" /></ListScroll>
                </CatList>
              </ColumnL>
              <ColumnR>
                <SampleBox><Legend>Sample</Legend>$87,000</SampleBox>
                <FieldLabel $h={17} $mt={5}><Uline>T</Uline>ype:</FieldLabel>
                <TypeInput>{'_($* #,##0_);_($* (#,##0);_($* "-"??_);_(@_)'}</TypeInput>
                <TypeList>
                  <Items>
                    {formats.map((f, i) => <TypeItem key={i} $sel={i === 6}>{f}</TypeItem>)}
                  </Items>
                  <ListScroll $w={18}><Tri $c="#666" /><ScrollGrip>≡</ScrollGrip><Tri $down $c="#666" /></ListScroll>
                </TypeList>
                <DeleteRow><DlgButton $w={73}>Delete</DlgButton></DeleteRow>
              </ColumnR>
            </PageGrid>
            <Desc>Type the number format code, using one of the existing codes as a starting point.</Desc>
          </Page>
          <DlgFoot>
            <DlgButton $def>OK</DlgButton>
            <DlgButton>Cancel</DlgButton>
          </DlgFoot>
        </DlgPanel>
      </Dialog>

      <Watermark>thaco</Watermark>
      <WatermarkBadge>ir</WatermarkBadge>
    </Shell>
  );
}
